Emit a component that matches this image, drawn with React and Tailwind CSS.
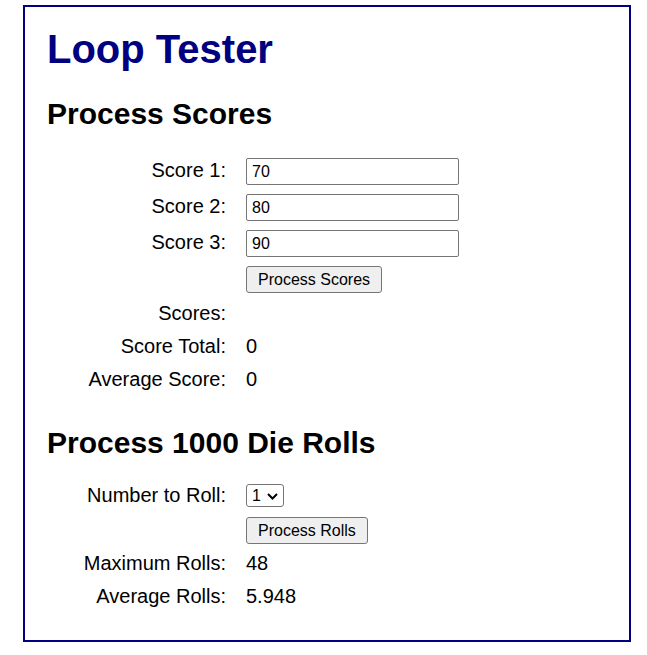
import { useState } from 'react';

function InputRow({ label, value, onChange, first }) {
  return (
    <div className={`flex items-baseline ${first ? 'mt-[27px]' : 'mt-[9px]'}`}>
      <label className="w-[181px] mr-[20px] text-right leading-[23px]">{label}</label>
      <input
        type="text"
        value={value}
        onChange={(e) => onChange(e.target.value)}
        className="w-[213px] h-[27px] border border-[#767676] rounded-[2px] px-[5px] text-[16px] leading-[18px] bg-white"
      />
    </div>
  );
}

function OutputRow({ label, value, className = 'mt-[10px]' }) {
  return (
    <div className={`flex leading-[23px] ${className}`}>
      <span className="w-[181px] mr-[20px] text-right">{label}</span>
      <span>{value}</span>
    </div>
  );
}

function PlainButton({ children, onClick, className = '' }) {
  return (
    <button
      type="button"
      onClick={onClick}
      className={`self-start ml-[201px] h-[27px] px-[11px] border border-[#767676] rounded-[3px] bg-[#efefef] text-[16px] leading-[18px] text-black ${className}`}
    >
      {children}
    </button>
  );
}

export default function App() {
  const [scores, setScores] = useState(['70', '80', '90']);
  const [numberToRoll, setNumberToRoll] = useState('1');

  const setScore = (i) => (v) => {
    setScores((prev) => prev.map((s, j) => (j === i ? v : s)));
  };

  return (
    <div className="min-h-[655px] bg-white text-black text-[20px] font-['Liberation_Sans',Arial,sans-serif]">
      <main className="ml-[23px] mt-[5px] w-[608px] border-2 border-[#000080] px-[20px] pb-[32px] flex flex-col">
        <h1 className="mt-[19px] ml-[2px] text-[40px] leading-[46px] font-bold text-[#000080]">Loop Tester</h1>

        {/* Scores section */}
        <h2 className="mt-[25px] ml-[2px] text-[30px] leading-[34px] font-bold">Process Scores</h2>
        {scores.map((s, i) => (
          <InputRow key={i} label={`Score ${i + 1}:`} value={s} onChange={setScore(i)} first={i === 0} />
        ))}
        <PlainButton className="mt-[9px]">Process Scores</PlainButton>
        <OutputRow label="Scores:" value="" className="mt-[9px]" />
        <OutputRow label="Score Total:" value="0" />
        <OutputRow label="Average Score:" value="0" />

        {/* Die rolls section */}
        <h2 className="mt-[35px] ml-[2px] text-[30px] leading-[34px] font-bold">Process 1000 Die Rolls</h2>
        <div className="mt-[24px] flex items-center h-[23px]">
          <label className="w-[181px] mr-[20px] text-right leading-[23px]">Number to Roll:</label>
          <div className="relative w-[38px] h-[23px]">
            <select
              value={numberToRoll}
              onChange={(e) => setNumberToRoll(e.target.value)}
              className="block appearance-none w-[38px] h-[23px] border border-[#767676] rounded-[3px] pl-[5px] text-[16px] leading-[18px] bg-white"
            >
              {[1, 2, 3, 4, 5, 6].map((n) => (
                <option key={n} value={n}>{n}</option>
              ))}
            </select>
            <svg
              className="pointer-events-none absolute right-[6px] top-[9px] w-[11px] h-[7px]"
              viewBox="0 0 11 7"
              fill="none"
              stroke="#000"
              strokeWidth="2"
            >
              <path d="M1 1 L5.5 5.5 L10 1" />
            </svg>
          </div>
        </div>
        <PlainButton className="mt-[10px]">Process Rolls</PlainButton>
        <OutputRow label="Maximum Rolls:" value="48" className="mt-[8px]" />
        <OutputRow label="Average Rolls:" value="5.948" />
      </main>
    </div>
  );
}
